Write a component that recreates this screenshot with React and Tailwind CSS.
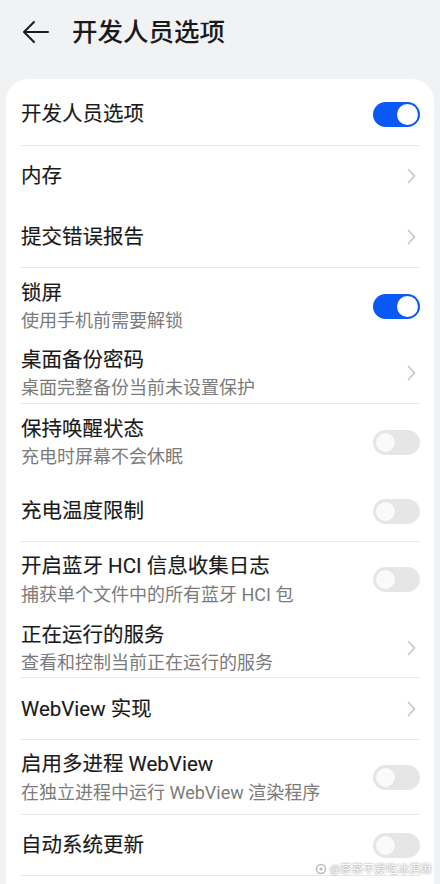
import React from "react";

const FONT = { fontFamily: 'Roboto, "Noto Sans CJK SC", "Noto Sans", sans-serif' };

function Toggle({ on }) {
  if (on) {
    return (
      <div className="w-[47px] h-[25px] rounded-full bg-[#0a59f7] flex items-center justify-end pr-[2px] shrink-0">
        <div className="w-[21px] h-[21px] rounded-full bg-white" />
      </div>
    );
  }
  return (
    <div className="w-[47px] h-[25px] rounded-full bg-[#e6e6e6] flex items-center pl-[2px] shrink-0">
      <div className="w-[21px] h-[21px] rounded-full bg-[#fafafa] border border-[#e2e2e2]" />
    </div>
  );
}

function Chevron() {
  return (
    <div className="w-[47px] flex justify-end pr-[4px] shrink-0">
      <svg width="9" height="16" viewBox="0 0 9 16" fill="none">
        <path d="M1.5 1.5 L7.5 8 L1.5 14.5" stroke="#c4c4c4" strokeWidth="1.5" strokeLinecap="round" strokeLinejoin="round" />
      </svg>
    </div>
  );
}

function Row({ title, sub, action, pad, gap }) {
  return (
    <div className={`flex items-center ${pad}`}>
      <div className="flex-1 min-w-0 flex flex-col">
        <div className={`text-[20.5px] text-[#1a1a1a] [-webkit-text-stroke:0.15px_#1a1a1a] ${sub ? "leading-[26px]" : "leading-[28px]"}`}>{title}</div>
        {sub && <div className={`text-[18px] leading-[22px] text-[#7b7b7b] ${gap}`}>{sub}</div>}
      </div>
      {action === "on" && <Toggle on />}
      {action === "off" && <Toggle on={false} />}
      {action === "more" && <Chevron />}
    </div>
  );
}

function Divider() {
  return <div className="h-px bg-[#e9e9e9]" />;
}

export default function App() {
  return (
    <div className="relative w-[440px] h-[884px] overflow-hidden bg-[#f1f2f4]" style={FONT}>
      {/* top bar */}
      <div className="h-[64px] flex items-center pl-[22px]">
        <svg width="27" height="24" viewBox="0 0 27 24" fill="none">
          <path d="M26 12 H2.5 M12 2 L2 12 L12 22" stroke="#1c1c1c" strokeWidth="2" strokeLinecap="round" strokeLinejoin="round" />
        </svg>
        <div className="ml-[23px] text-[25.5px] leading-[32px] font-medium text-[#1a1a1a]">开发人员选项</div>
      </div>

      {/* settings card */}
      <div className="mx-[6px] mt-[15px] bg-white rounded-[22px] pl-[15px] pr-[14px] h-[900px]">
        <Row title="开发人员选项" action="on" pad="pt-[21px] pb-[17px]" />
        <Divider />
        <Row title="内存" action="more" pad="pt-[16px] pb-[17px]" />
        <Row title="提交错误报告" action="more" pad="pt-[16px] pb-[16px]" />
        <Divider />
        <Row title="锁屏" sub="使用手机前需要解锁" action="on" pad="pt-[12px] pb-[4px]" gap="mt-[4px]" />
        <Row title="桌面备份密码" sub="桌面完整备份当前未设置保护" action="more" pad="pt-[11px] pb-[4px]" gap="mt-[4px]" />
        <Divider />
        <Row title="保持唤醒状态" sub="充电时屏幕不会休眠" action="off" pad="pt-[12px] pb-[12px]" gap="mt-[4px]" />
        <Row title="充电温度限制" action="off" pad="pt-[17px] pb-[16px]" />
        <Divider />
        <Row title="开启蓝牙 HCI 信息收集日志" sub="捕获单个文件中的所有蓝牙 HCI 包" action="off" pad="pt-[11px] pb-[5px]" gap="mt-[5px]" />
        <Row title="正在运行的服务" sub="查看和控制当前正在运行的服务" action="more" pad="pt-[11px] pb-[3px]" gap="mt-[4px]" />
        <Divider />
        <Row title="WebView 实现" action="more" pad="pt-[17px] pb-[16px]" />
        <Divider />
        <Row title="启用多进程 WebView" sub="在独立进程中运行 WebView 渲染程序" action="off" pad="pt-[11px] pb-[10px]" gap="mt-[5px]" />
        <Divider />
        <Row title="自动系统更新" action="off" pad="pt-[16px] pb-[16px]" />
        <Divider />
      </div>

      {/* author watermark */}
      <div className="absolute right-[8px] bottom-[8px] flex items-center gap-[3px] text-[11.5px] leading-[14px] text-white [text-shadow:0_0_2px_rgba(0,0,0,0.6)]">
        <svg width="12" height="12" viewBox="0 0 12 12" fill="none">
          <circle cx="6" cy="6" r="4.5" stroke="#bdbdbd" strokeWidth="1.5" />
          <circle cx="6" cy="6" r="1.6" fill="#bdbdbd" />
        </svg>
        <span>@茶茶不爱吃冰淇淋</span>
      </div>
    </div>
  );
}
